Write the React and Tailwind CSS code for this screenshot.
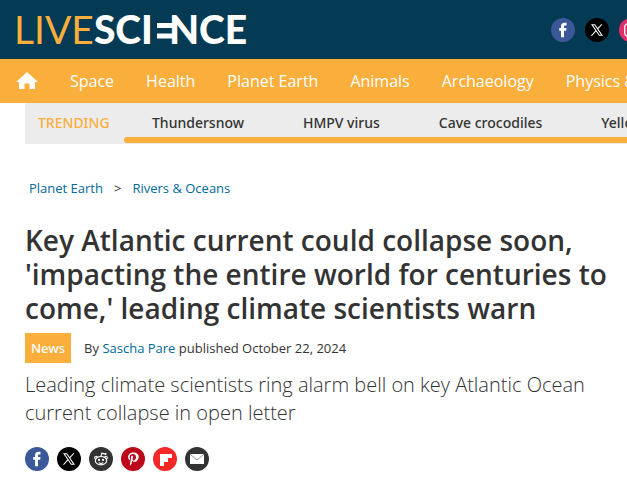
const topics = ["Space", "Health", "Planet Earth", "Animals", "Archaeology", "Physics & Math"];
const trending = ["Thundersnow", "HMPV virus", "Cave crocodiles", "Yellowstone"];

function Facebook() {
  return (
    <svg viewBox="0 0 24 24" className="size-6" aria-hidden="true">
      <circle cx="12" cy="12" r="12" fill="#3b5998" />
      <path fill="#fff" d="M10 19.300v-6.600H8.200v-2.600H10V8.500c0-2.400 1.300-3.700 3.500-3.700h2v2.600h-1.300c-.9 0-1.200.4-1.200 1.200v1.500h2.500l-.3 2.600H13v6.600z" />
    </svg>
  );
}

function XLogo() {
  return (
    <svg viewBox="0 0 24 24" className="size-6" aria-hidden="true">
      <circle cx="12" cy="12" r="12" />
      <path fill="#fff" fillRule="evenodd" d="M6 6.200h4l2.700 3.800 3.500-3.800h1.300l-4.200 4.700 4.700 6.900h-4l-3-4.400-3.900 4.400H5.800l4.600-5.300zm2 1 6.500 9.500h1.500L9.500 7.200z" />
    </svg>
  );
}

function Instagram() {
  return (
    <svg viewBox="0 0 24 24" className="size-6" aria-hidden="true">
      <circle cx="12" cy="12" r="12" fill="#e1306c" />
      <rect x="5.700" y="5.700" width="12.600" height="12.600" rx="3.600" fill="none" stroke="#fff" strokeWidth="1.300" />
      <circle cx="12" cy="12" r="3" fill="none" stroke="#fff" strokeWidth="1.300" />
      <circle cx="15.500" cy="8.500" r=".8" fill="#fff" />
    </svg>
  );
}

function Reddit() {
  return (
    <svg viewBox="0 0 24 24" className="size-6" aria-hidden="true">
      <circle cx="12" cy="12" r="12" fill="#333" />
      <g fill="none" stroke="#fff" strokeWidth="1.100">
        <ellipse cx="12" cy="13.700" rx="5.700" ry="4.200" />
        <path d="M12 9.500l.8-3.300 2.900.7M6.800 12.200a1.400 1.400 0 1 1 1.600-1.800M17.200 12.200a1.400 1.400 0 1 0-1.600-1.800M9.700 15.600c1.300 1 3.300 1 4.600 0" />
      </g>
      <circle cx="16.500" cy="7" r="1.100" fill="#fff" />
      <circle cx="10" cy="12.900" r="1.100" fill="#fff" />
      <circle cx="14" cy="12.900" r="1.100" fill="#fff" />
    </svg>
  );
}

function Pinterest() {
  return (
    <svg viewBox="0 0 24 24" className="size-6" aria-hidden="true">
      <circle cx="12" cy="12" r="12" fill="#bd081c" />
      <path fill="#fff" d="M12.300 5.500c-3.400 0-5.200 2.300-5.200 4.600 0 1.200.6 2.500 1.600 3 .2.1.3 0 .3-.1l.3-1-.1-.3c-.4-.5-.6-1-.6-1.600 0-1.600 1.200-3.100 3.300-3.100 1.900 0 3.100 1.200 3.100 3 0 2-1 3.400-2.300 3.400-.7 0-1.300-.6-1.100-1.300.2-.9.6-1.800.6-2.400 0-1.400-2.300-1.300-2.300.8 0 .7.200 1.100.2 1.100l-1 4.200c-.3 1.200 0 2.700 0 2.800 0 .1.100.1.200.1.100-.1 1.100-1.400 1.400-2.600l.6-2.300c.3.500 1.100 1 2 1 2.600 0 4.400-2.300 4.400-5.100 0-2.300-2-4.200-5-4.200z" />
    </svg>
  );
}

function Flipboard() {
  return (
    <svg viewBox="0 0 24 24" className="size-6" aria-hidden="true">
      <circle cx="12" cy="12" r="12" fill="#f52828" />
      <path fill="#fff" d="M7 7h12v4h-4v4h-4v4H7z" />
    </svg>
  );
}

function Email() {
  return (
    <svg viewBox="0 0 24 24" className="size-6" aria-hidden="true">
      <circle cx="12" cy="12" r="12" fill="#333" />
      <rect x="5" y="7" width="14" height="10" fill="#fff" />
      <path d="M5 7.200l7 5.800 7-5.800" fill="none" stroke="#888" strokeWidth=".9" />
    </svg>
  );
}

const shares = [
  ["Facebook", Facebook],
  ["X", XLogo],
  ["Reddit", Reddit],
  ["Pinterest", Pinterest],
  ["Flipboard", Flipboard],
  ["Email", Email],
];

function Logo() {
  return (
    <a href="#home" aria-label="Live Science" className="flex h-14 items-center font-['Lato',sans-serif] text-[39px] leading-none text-white">
      <span className="text-[#faae3b]">LIVE</span>
      <span className="font-black">SCI</span>
      <svg viewBox="0 0 20 28" className="ml-1 -mr-2 h-7 w-5" aria-hidden="true">
        <path fill="#fff" d="M0 7h16v5H0zM0 17.500h16v5H0z" />
      </svg>
      <span className="font-black">NCE</span>
    </a>
  );
}

export default function App() {
  return (
    <div className="overflow-hidden bg-white font-['Open_Sans','Noto_Sans',sans-serif] text-[#333]">
      <header className="flex h-[59px] items-center justify-between overflow-hidden bg-[#043a53] pl-3.5">
        <Logo />
        <div className="-mr-4 flex shrink-0 gap-2.5">
          <a href="#facebook" aria-label="Facebook"><Facebook /></a>
          <a href="#x" aria-label="X"><XLogo /></a>
          <a href="#instagram" aria-label="Instagram"><Instagram /></a>
        </div>
      </header>

      <nav className="flex h-11 items-center gap-8 overflow-hidden bg-[#faae3b] pl-4 text-base whitespace-nowrap text-white">
        <a href="#home" aria-label="Home" className="shrink-0">
          <svg viewBox="0 0 22 18" className="h-[18px] w-[22px]" aria-hidden="true">
            <path fill="#fff" d="M11 0l11 10h-3v7h-5.500v-5.500h-5V17H3v-7H0z" />
          </svg>
        </a>
        {topics.map((t) => (
          <a key={t} href="#topic" className="shrink-0">{t}</a>
        ))}
      </nav>

      <section className="ml-[25px] flex h-[41px] overflow-hidden bg-[#ececec] font-['Noto_Sans','Open_Sans',sans-serif] text-sm font-medium whitespace-nowrap">
        <h2 className="w-[99px] shrink-0 pl-[13px] leading-10 text-[#faae3b]">TRENDING</h2>
        <div className="flex min-w-0 flex-1 flex-col overflow-hidden">
          <ul className="flex h-[34px] gap-[59px] pl-7 leading-10">
            {trending.map((t) => (
              <li key={t} className="shrink-0"><a href="#trending">{t}</a></li>
            ))}
          </ul>
          <div className="h-1.5 rounded-l-full bg-[#faae3b]" />
        </div>
      </section>

      <main className="px-[25px] pb-3">
        <nav aria-label="Breadcrumb" className="mt-[34px] flex gap-[11px] pl-1 text-[13px] leading-5">
          <a href="#planet-earth" className="text-[#006a9d]">Planet Earth</a>
          <span>&gt;</span>
          <a href="#oceans" className="text-[#006a9d]">Rivers &amp; Oceans</a>
        </nav>
        <h1 className="mt-[25px] -mr-4 text-[28px] leading-[34px] font-semibold">
          Key Atlantic current could collapse soon, 'impacting the entire world for centuries to come,' leading climate scientists warn
        </h1>
        <div className="mt-2 flex items-center gap-[13px] text-[13px] leading-[30px]">
          <a href="#news" className="bg-[#faae3b] px-1.5 font-['Noto_Sans','Open_Sans',sans-serif] font-medium text-white">News</a>
          <p>By <a href="#author" className="text-[#006a9d]">Sascha Pare</a> published October 22, 2024</p>
        </div>
        <p className="mt-2 text-xl leading-7 font-light">
          Leading climate scientists ring alarm bell on key Atlantic Ocean current collapse in open letter
        </p>
        <div className="mt-5 flex gap-2">
          {shares.map(([name, Icon]) => (
            <a key={name} href="#share" aria-label={`Share on ${name}`}><Icon /></a>
          ))}
        </div>
      </main>
    </div>
  );
}
